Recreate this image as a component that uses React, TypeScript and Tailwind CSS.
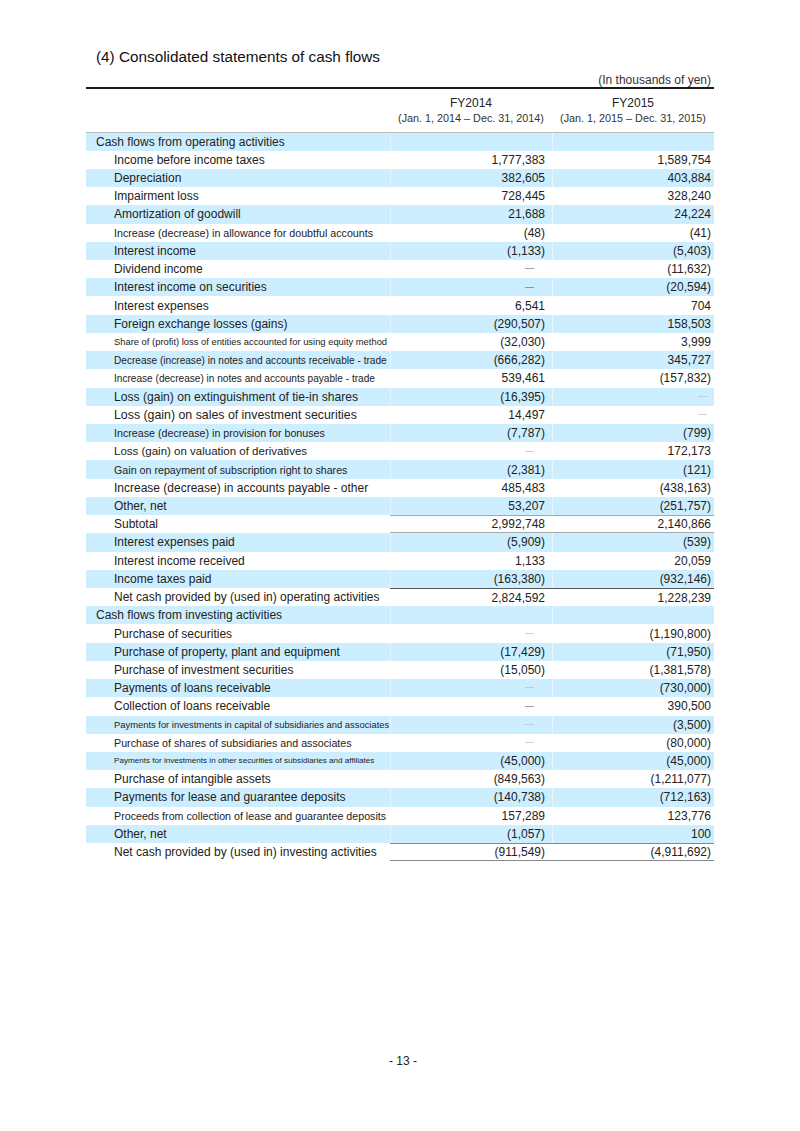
type Row = {
  label: string;
  size?: string;
  section?: boolean;
  a?: string;
  b?: string;
  // dash shade: "d" dark, "l" light
  da?: "d" | "l";
  db?: "d" | "l";
  lineTop?: string;
  lineBottom?: string;
};

const rows: Row[] = [
  { label: "Cash flows from operating activities", section: true },
  { label: "Income before income taxes", a: "1,777,383", b: "1,589,754" },
  { label: "Depreciation", a: "382,605", b: "403,884" },
  { label: "Impairment loss", a: "728,445", b: "328,240" },
  { label: "Amortization of goodwill", a: "21,688", b: "24,224" },
  { label: "Increase (decrease) in allowance for doubtful accounts", size: "text-[10.7px]", a: "(48)", b: "(41)" },
  { label: "Interest income", a: "(1,133)", b: "(5,403)" },
  { label: "Dividend income", da: "d", b: "(11,632)" },
  { label: "Interest income on securities", da: "d", b: "(20,594)" },
  { label: "Interest expenses", a: "6,541", b: "704" },
  { label: "Foreign exchange losses (gains)", a: "(290,507)", b: "158,503" },
  { label: "Share of (profit) loss of entities accounted for using equity method", size: "text-[9.4px]", a: "(32,030)", b: "3,999" },
  { label: "Decrease (increase) in notes and accounts receivable - trade", size: "text-[10.1px]", a: "(666,282)", b: "345,727" },
  { label: "Increase (decrease) in notes and accounts payable - trade", size: "text-[10.1px]", a: "539,461", b: "(157,832)" },
  { label: "Loss (gain) on extinguishment of tie-in shares", size: "text-[12.1px]", a: "(16,395)", db: "l" },
  { label: "Loss (gain) on sales of investment securities", size: "text-[12.35px]", a: "14,497", db: "l" },
  { label: "Increase (decrease) in provision for bonuses", size: "text-[10.7px]", a: "(7,787)", b: "(799)" },
  { label: "Loss (gain) on valuation of derivatives", size: "text-[11.5px]", da: "l", b: "172,173" },
  { label: "Gain on repayment of subscription right to shares", size: "text-[10.7px]", a: "(2,381)", b: "(121)" },
  { label: "Increase (decrease) in accounts payable - other", a: "485,483", b: "(438,163)" },
  { label: "Other, net", a: "53,207", b: "(251,757)" },
  { label: "Subtotal", a: "2,992,748", b: "2,140,866", lineTop: "border-t border-[#a8a8a8]", lineBottom: "border-b border-[#777]" },
  { label: "Interest expenses paid", a: "(5,909)", b: "(539)" },
  { label: "Interest income received", a: "1,133", b: "20,059" },
  { label: "Income taxes paid", a: "(163,380)", b: "(932,146)" },
  { label: "Net cash provided by (used in) operating activities", a: "2,824,592", b: "1,228,239", lineTop: "border-t border-[#555]" },
  { label: "Cash flows from investing activities", section: true },
  { label: "Purchase of securities", da: "l", b: "(1,190,800)" },
  { label: "Purchase of property, plant and equipment", a: "(17,429)", b: "(71,950)" },
  { label: "Purchase of investment securities", a: "(15,050)", b: "(1,381,578)" },
  { label: "Payments of loans receivable", da: "l", b: "(730,000)" },
  { label: "Collection of loans receivable", da: "d", b: "390,500" },
  { label: "Payments for investments in capital of subsidiaries and associates", size: "text-[9.4px]", da: "l", b: "(3,500)" },
  { label: "Purchase of shares of subsidiaries and associates", size: "text-[10.7px]", da: "l", b: "(80,000)" },
  { label: "Payments for investments in other securities of subsidiaries and affiliates", size: "text-[8.1px]", a: "(45,000)", b: "(45,000)" },
  { label: "Purchase of intangible assets", a: "(849,563)", b: "(1,211,077)" },
  { label: "Payments for lease and guarantee deposits", size: "text-[12px]", a: "(140,738)", b: "(712,163)" },
  { label: "Proceeds from collection of lease and guarantee deposits", size: "text-[10.7px]", a: "157,289", b: "123,776" },
  { label: "Other, net", a: "(1,057)", b: "100" },
  { label: "Net cash provided by (used in) investing activities", a: "(911,549)", b: "(4,911,692)", lineTop: "border-t border-[#555]", lineBottom: "border-b-[1.5px] border-[#888]" },
];

function Dash({ shade }: { shade: "d" | "l" }) {
  return (
    <span className={shade === "d" ? "text-[#555] text-[9px]" : "text-[#b0b0b0] text-[9px]"}>—</span>
  );
}

export default function App() {
  return (
    <div
      className="w-[800px] h-[1131px] bg-white flex flex-col text-[#222]"
      style={{ fontFamily: '"Liberation Sans", Arial, sans-serif' }}
    >
      <div className="pt-[48px] pl-[96px] text-[15.3px] leading-[17px] text-[#111]">(4) Consolidated statements of cash flows</div>

      <div className="ml-[86px] w-[628px] mt-[9px]">
        <div className="text-right pr-[3px] text-[12px] leading-[13px] text-[#333]">(In thousands of yen)</div>
        <div className="h-[2px] bg-[#1a1a1a]" />

        {/* Column headings */}
        <div className="flex pt-[7px] pb-[7px] border-b border-[#bbb]">
          <div className="w-[304px]" />
          <div className="w-[162px] text-center">
            <div className="text-[12px] leading-[14px]">FY2014</div>
            <div className="text-[10.8px] leading-[13px] mt-[1.5px] text-[#333]">(Jan. 1, 2014 – Dec. 31, 2014)</div>
          </div>
          <div className="w-[162px] text-center">
            <div className="text-[12px] leading-[14px]">FY2015</div>
            <div className="text-[10.8px] leading-[13px] mt-[1.5px] text-[#333]">(Jan. 1, 2015 – Dec. 31, 2015)</div>
          </div>
        </div>

        {/* Rows */}
        {rows.map((r, i) => {
          const blue = i % 2 === 0;
          const bg = blue ? "bg-[#cdeeff]" : "bg-white";
          return (
            <div key={i} className={`flex h-[18.23px] ${bg}`}>
              <div
                className={`w-[304px] flex items-center whitespace-nowrap ${r.section ? "pl-[10px]" : "pl-[28px]"} ${r.size ?? "text-[12px]"}`}
              >
                {r.label}
              </div>
              <div className={`w-[324px] flex ${r.lineTop ?? ""} ${r.lineBottom ?? ""}`}>
                <div className={`w-[162px] flex items-center justify-end text-[12px] ${blue ? "border-l border-[#e4f6ff]" : ""} ${r.a ? "pr-[7px]" : "pr-[18px]"}`}>
                  {r.a ?? (r.da ? <Dash shade={r.da} /> : null)}
                </div>
                <div className={`w-[162px] flex items-center justify-end text-[12px] ${blue ? "border-l border-[#e4f6ff]" : ""} ${r.b ? "pr-[3px]" : "pr-[7px]"}`}>
                  {r.b ?? (r.db ? <Dash shade={r.db} /> : null)}
                </div>
              </div>
            </div>
          );
        })}
      </div>

      <div className="flex-1" />
      <div className="text-center text-[12px] leading-[14px] pb-[63px] pl-[6px]">- 13 -</div>
    </div>
  );
}
